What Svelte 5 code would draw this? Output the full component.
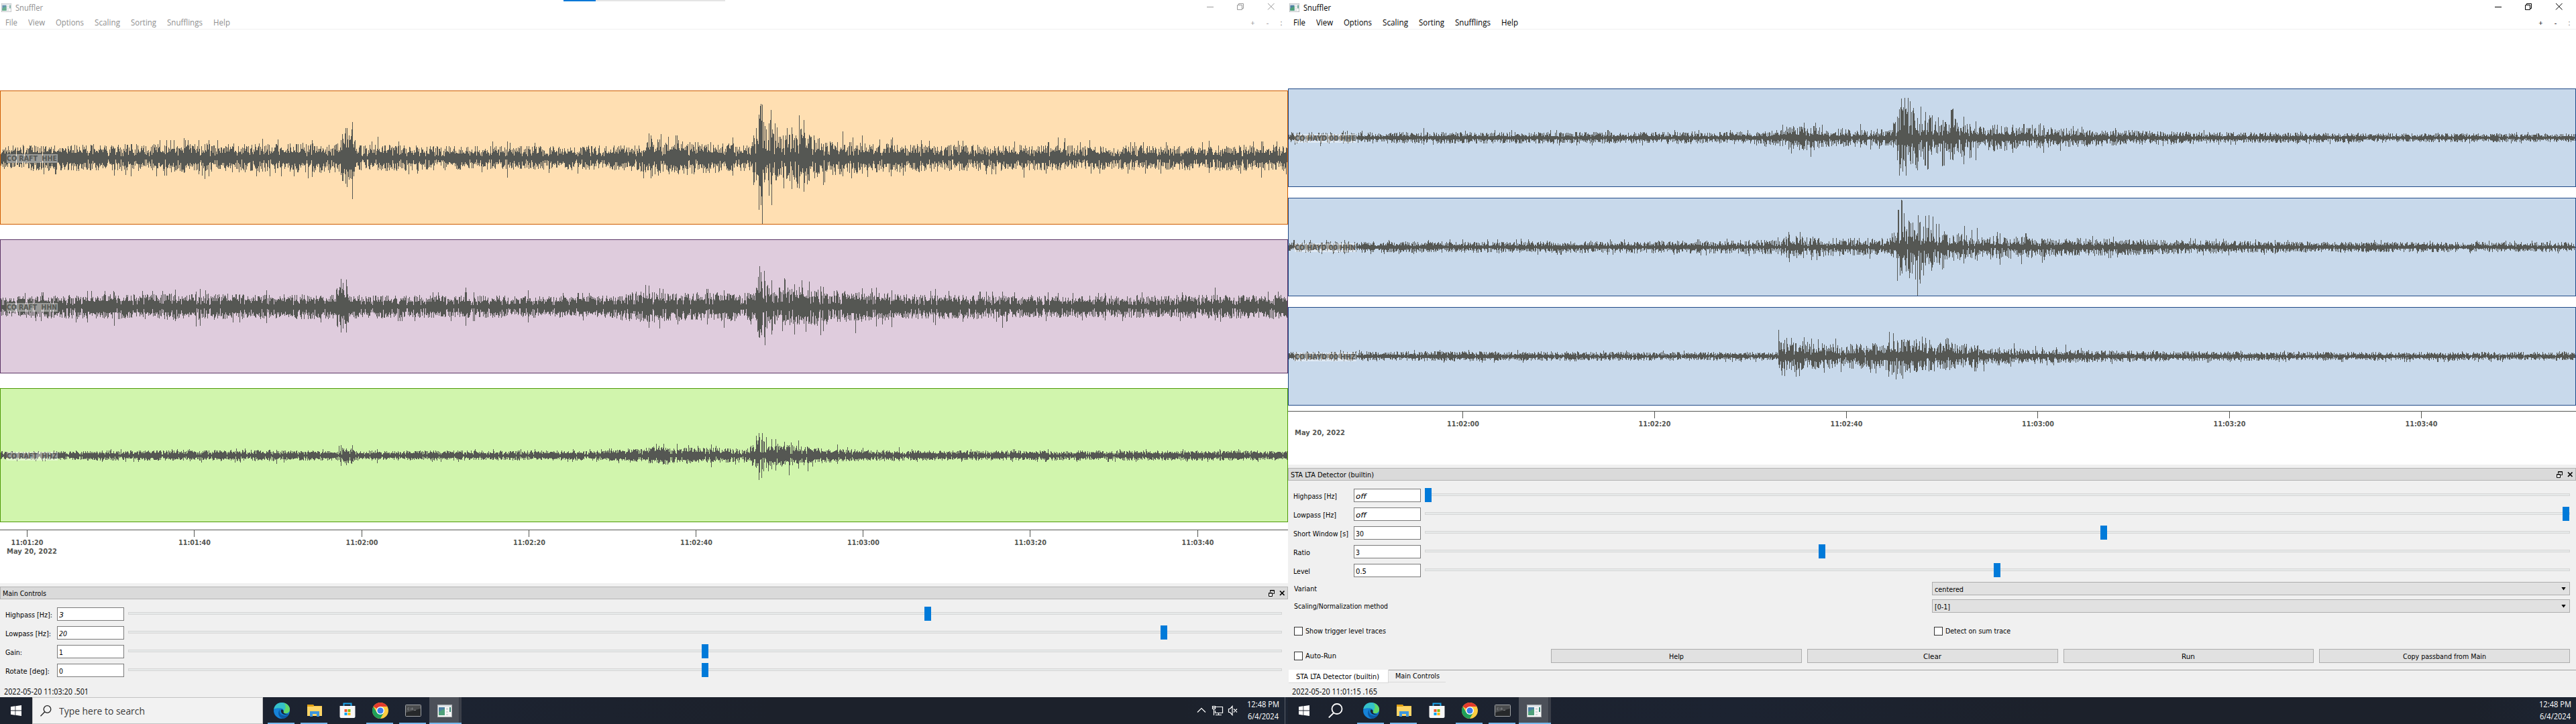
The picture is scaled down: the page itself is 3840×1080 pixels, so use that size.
<script>
  // Condenses or widens a label's glyphs so that it takes the given width in pixels.
  function fit(node, width) {
    const natural = node.getBoundingClientRect().width;
    node.style.transform = `scaleX(${width / natural})`;
    node.style.marginRight = `${width - natural}px`;
  }

  function noise(seed) {
    let s = seed;
    return () => {
      s = (s * 1664525 + 1013904223) % 4294967296;
      return s / 4294967296;
    };
  }

  function level(env, x) {
    for (let i = 1; i < env.length; i++) {
      if (x <= env[i][0]) {
        const [x0, a] = env[i - 1];
        const [x1, b] = env[i];
        return a + ((b - a) * (x - x0)) / (x1 - x0);
      }
    }
    return env[env.length - 1][1];
  }

  // One vertical stroke for each pixel column, from the envelope and the named peaks.
  function wave({ seed, mid, env, peaks, core }) {
    const rnd = noise(seed);
    const peakAt = new Map(peaks.map(([x, up, down]) => [Math.round(x), [up, down]]));
    let d = '';
    for (let x = 0; x < 1920; x++) {
      const e = level(env, x);
      const quiet = rnd() < 0.12 ? 0.3 : 1;
      let up = e * (core + (1 - core) * Math.pow(rnd(), 1.4)) * quiet;
      let down = e * (core + (1 - core) * Math.pow(rnd(), 1.4)) * quiet;
      if (rnd() < 0.02) up = e * 1.25;
      if (rnd() < 0.02) down = e * 1.25;
      if (peakAt.has(x)) {
        const [u, w] = peakAt.get(x);
        up = Math.max(up, u);
        down = Math.max(down, w);
      }
      d += `M${x}.5 ${Math.round(mid - up)}V${Math.round(mid + down) + 1}`;
    }
    return d;
  }

  const tasks = ['edge', 'folder', 'store', 'chrome', 'cmd', 'app'];
  const menus = [['File', 18], ['View', 25], ['Options', 42], ['Scaling', 38], ['Sorting', 38], ['Snufflings', 53], ['Help', 25]];

  const left = {
    side: 'left',
    clip: 84,
    ticks: [40, 289.5, 539, 788.5, 1037.5, 1286.5, 1535.5, 1785],
    times: ['11:01:20', '11:01:40', '11:02:00', '11:02:20', '11:02:40', '11:03:00', '11:03:20', '11:03:40'],
    dock: ['Main Controls', 65],
    rows: [
      ['Highpass [Hz]:', 70, '3', true, 1187, 7],
      ['Lowpass [Hz]:', 68, '20', true, 1539, 12],
      ['Gain:', 25, '1', false, 855, 6],
      ['Rotate [deg]:', 66, '0', false, 855, 6]
    ],
    stamp: ['2022-05-20 11:03:20 .501', 126],
    traces: [
      {
        name: 'CO RAFT  HHE', tone: 'orange', seed: 11, mid: 100, core: 0.33,
        env: [[0, 15], [20, 19], [300, 21], [500, 22], [507, 24], [510, 36], [527, 45], [531, 18], [560, 20], [700, 17], [950, 19], [968, 29], [1050, 24], [1120, 19], [1124, 38], [1131, 62], [1140, 62], [1148, 45], [1160, 38], [1175, 34], [1190, 46], [1205, 38], [1225, 29], [1260, 25], [1300, 22], [1400, 20], [1600, 18], [1920, 19]],
        peaks: [[274, 29, 22], [296, 26, 24], [305, 20, 31], [311, 26, 27], [391, 28, 20], [459, 18, 30], [465, 26, 28], [510, 35, 34], [515, 44, 38], [517, 44, 43], [525, 53, 61], [563, 31, 18], [734, 24, 12], [756, 24, 29], [170, 12, 26], [195, 20, 27], [233, 10, 27], [970, 33, 30], [996, 31, 20], [1092, 30, 20], [1123, 33, 40], [1131, 64, 77], [1134, 80, 70], [1136, 79, 98], [1146, 51, 56], [1149, 71, 30], [1150, 30, 70], [1158, 45, 20], [1173, 44, 30], [1180, 45, 46], [1191, 63, 45], [1198, 56, 50], [1227, 20, 40], [1256, 39, 27], [1285, 33, 23], [1330, 30, 17], [1526, 10, 29], [1577, 30, 12], [1587, 29, 16], [1624, 26, 10], [1802, 25, 22], [1880, 24, 29]]
      },
      {
        name: 'CO RAFT  HHN', tone: 'purple', seed: 29, mid: 100, core: 0.4,
        env: [[0, 14], [80, 18], [300, 19], [500, 18], [506, 30], [518, 34], [521, 17], [900, 16], [965, 26], [985, 21], [1125, 21], [1130, 48], [1140, 42], [1146, 28], [1200, 30], [1230, 27], [1260, 23], [1350, 19], [1600, 16], [1920, 18]],
        peaks: [[261, 25, 21], [298, 26, 28], [170, 21, 28], [292, 22, 29], [508, 41, 38], [511, 35, 32], [516, 40, 38], [397, 24, 24], [694, 28, 28], [787, 24, 23], [967, 31, 31], [983, 27, 32], [1079, 24, 31], [1132, 60, 46], [1134, 51, 38], [1139, 47, 45], [1140, 38, 57], [1150, 39, 41], [1169, 42, 20], [1170, 40, 20], [1184, 33, 41], [1195, 39, 20], [1223, 30, 42], [1227, 29, 36], [1275, 20, 39], [1306, 28, 29], [1329, 24, 30], [1394, 26, 27], [1494, 18, 31], [1811, 28, 20]]
      },
      {
        name: 'CO RAFT  HHZ', tone: 'green', seed: 47, mid: 100, core: 0.4,
        env: [[0, 6], [80, 6], [120, 7], [400, 8], [500, 7], [506, 12], [525, 12], [530, 7], [900, 7], [960, 12], [980, 14], [1020, 12], [1060, 11], [1115, 10], [1123, 18], [1130, 28], [1137, 26], [1145, 18], [1200, 14], [1240, 10], [1300, 8], [1400, 7], [1920, 7]],
        peaks: [[508, 15, 9], [516, 10, 14], [525, 15, 8], [412, 8, 12], [562, 9, 11], [1009, 17, 10], [1060, 16, 17], [1127, 29, 18], [1131, 33, 36], [1132, 27, 20], [1135, 23, 33], [1142, 27, 18], [1150, 24, 20], [1156, 24, 22], [1176, 15, 29], [1190, 22, 19], [1204, 11, 23], [1248, 16, 9], [1340, 12, 8]]
      }
    ]
  };

  const right = {
    side: 'right',
    clip: 100,
    ticks: [260.5, 546, 832, 1117.5, 1403, 1689],
    times: ['11:02:00', '11:02:20', '11:02:40', '11:03:00', '11:03:20', '11:03:40'],
    dock: ['STA LTA Detector (builtin)', 124],
    rows: [
      ['Highpass [Hz]', 65, 'off', true, 0, 16],
      ['Lowpass [Hz]', 64, 'off', true, 1696, 16],
      ['Short Window [s]', 82, '30', false, 1007, 12],
      ['Ratio', 25, '3', false, 587, 6],
      ['Level', 25, '0.5', false, 848, 16]
    ],
    stamp: ['2022-05-20 11:01:15 .165', 127],
    traces: [
      {
        name: 'CO HAYD 00 HHE', tone: 'blue', seed: 5, mid: 73, core: 0.2,
        env: [[0, 8], [700, 9], [733, 12], [745, 18], [785, 18], [800, 14], [900, 13], [907, 30], [912, 48], [935, 46], [960, 34], [1000, 32], [1015, 24], [1030, 18], [1060, 22], [1080, 16], [1150, 15], [1200, 12], [1300, 10], [1400, 8], [1550, 7], [1920, 6]],
        peaks: [[48, 1, 12], [202, 14, 7], [737, 19, 12], [779, 14, 28], [853, 20, 14], [908, 28, 20], [914, 58, 30], [913, 45, 20], [927, 54, 34], [921, 43, 56], [916, 40, 50], [938, 28, 48], [943, 46, 28], [949, 25, 41], [950, 37, 41], [976, 26, 41], [991, 43, 33], [990, 42, 32], [1007, 31, 39], [1025, 24, 33], [1080, 19, 22], [1121, 21, 15], [1126, 18, 22]]
      },
      {
        name: 'CO HAYD 00 HHN', tone: 'blue', seed: 83, mid: 73, core: 0.2,
        env: [[0, 8], [600, 9], [730, 11], [745, 18], [800, 14], [890, 13], [906, 18], [910, 42], [935, 38], [962, 34], [980, 23], [1010, 19], [1050, 18], [1150, 14], [1250, 12], [1350, 10], [1500, 8], [1920, 7]],
        peaks: [[347, 12, 6], [763, 22, 10], [747, 18, 22], [908, 10, 50], [909, 55, 10], [910, 55, 10], [914, 70, 35], [915, 69, 39], [918, 50, 10], [921, 20, 36], [926, 34, 46], [930, 15, 39], [938, 20, 72], [942, 37, 54], [941, 36, 48], [947, 15, 42], [950, 46, 15], [955, 47, 25], [961, 45, 26], [959, 20, 35], [966, 34, 15], [970, 34, 20], [977, 18, 31], [1008, 31, 10], [1019, 25, 16], [1027, 28, 20], [1061, 20, 26], [1093, 14, 25], [1124, 12, 23]]
      },
      {
        name: 'CO HAYD 00 HHZ', tone: 'blue', seed: 61, mid: 73, core: 0.22,
        env: [[0, 7], [300, 7], [650, 6], [729, 6], [731, 20], [742, 26], [770, 22], [820, 18], [885, 20], [900, 27], [960, 25], [990, 20], [1030, 17], [1070, 12], [1150, 10], [1250, 8], [1350, 7], [1500, 6], [1920, 6]],
        peaks: [[731, 39, 10], [732, 22, 17], [740, 24, 29], [743, 27, 10], [750, 27, 20], [762, 10, 29], [769, 28, 10], [799, 17, 24], [816, 26, 10], [896, 36, 15], [895, 20, 30], [902, 34, 20], [914, 24, 28], [945, 29, 20], [950, 27, 20], [980, 25, 20], [1037, 10, 22], [1082, 19, 8], [1114, 15, 5], [1159, 17, 8]]
      }
    ]
  };

  const buttons = [['Help', 22], ['Clear', 27], ['Run', 20], ['Copy passband from Main', 124]];
</script>

{#snippet appIcon()}
  <svg class="app-glyph" viewBox="0 0 22 19" preserveAspectRatio="none">
    <rect x="0.5" y="0.5" width="21" height="18" fill="#f6f6f6" stroke="#a9adb0" />
    <rect x="1" y="1" width="20" height="2" fill="#d8dde2" />
    <rect x="2" y="4" width="9" height="12" fill="#4d7fa3" />
    <path d="M2 16V11L11 6V16Z" fill="#4fa07a" />
    <path d="M13 5h3v3h-3zM13 10h3v2h-3zM13 14h3v2h-3z" fill="#d5d8da" />
    <rect x="18" y="4" width="2" height="7" fill="#3b8a78" />
  </svg>
{/snippet}

{#snippet taskIcon(kind)}
  {#if kind === 'edge'}
    <svg width="24" height="24" viewBox="0 0 24 24">
      <circle cx="12" cy="12" r="12" fill="#0f7bd0" />
      <path d="M0.3 10C1 4 6 0 12 0c7 0 12 4.600 12 10 0 4-3 6-6 6-3 0-4-1-3.400-2 .8-1.600 .2-5.500-4.600-5.500C5 8.500 1 9 .3 10Z" fill="#35c1c9" />
      <path d="M15 1c5 1 9 5 9 9 0 4-3 6-6 6-3 0-4-1-3.400-2C17 9 20 6 15 1Z" fill="#63d968" />
      <path d="M9 9.500C5 13 7 21 14 23.800 8 25 1.500 20 .3 13 1 9 5 7.500 9 9.500Z" fill="#1683d8" />
      <path d="M9.500 11c-2 3 0 8 6 8.500 3 .2 5-1 7-2C20 22 16 24 13 23.800 7 22 5 14 9.500 11Z" fill="#0c59a4" />
      <path d="M11.500 10.500c-1.500 2-.5 6.500 5 7.500 2 .3 4-.3 6-1.500-3 2-8 0-8-2.500.6-1.600 0-3.500-3-3.500Z" fill="#1c2430" />
    </svg>
  {:else if kind === 'folder'}
    <svg width="22" height="18" viewBox="0 0 22 18">
      <path d="M0 0h9l1 2h12v15H0Z" fill="#f6c544" />
      <path d="M0 0h9l1 2-1 1H0Z" fill="#e19f10" />
      <rect y="3" width="22" height="14" fill="#ffd667" />
      <path d="M4 18v-8h14v8h-4v-4H8v4Z" fill="#3f97dd" />
    </svg>
  {:else if kind === 'store'}
    <svg width="24" height="24" viewBox="0 0 24 24">
      <path d="M6.500 7V1.500h11V7" fill="none" stroke="#1ba4ea" stroke-width="2" />
      <path d="M.5 5h23v16q0 2-2 2h-19q-2 0-2-2Z" fill="#f7f7f7" />
      <rect x="7.500" y="10" width="4" height="4" fill="#f35325" />
      <rect x="12.500" y="10" width="4" height="4" fill="#81bc06" />
      <rect x="7.500" y="15" width="4" height="4" fill="#05a6f0" />
      <rect x="12.500" y="15" width="4" height="4" fill="#ffba08" />
    </svg>
  {:else if kind === 'chrome'}
    <svg width="24" height="24" viewBox="0 0 24 24">
      <circle cx="12" cy="12" r="12" fill="#ffcd40" />
      <path d="M12 12 1.600 6A12 12 0 0 1 22.400 6H12Z" fill="#e33b2e" />
      <path d="M1.600 6A12 12 0 0 0 12 24L17.200 15 12 12 6.800 15Z" fill="#1fa05a" />
      <circle cx="12" cy="12" r="6" fill="#fff" />
      <circle cx="12" cy="12" r="4.600" fill="#3b7ded" />
    </svg>
  {:else if kind === 'cmd'}
    <svg width="24" height="18" viewBox="0 0 24 18">
      <rect x="0.5" y="0.5" width="23" height="17" rx="1" fill="#26282a" stroke="#a2a5a8" />
      <path d="M1 1h22v5L1 12Z" fill="#4a4c4e" />
      <path d="M6 5H4v3h2M8 5v1M8 7v1M10 8V5h1v3M13 8.500h3" fill="none" stroke="#8b8d8f" stroke-width="0.8" />
    </svg>
  {:else}
    {@render appIcon()}
  {/if}
{/snippet}

{#snippet windowTop(win)}
  <header class="titlebar">
    <span class="title-icon">{@render appIcon()}</span>
    <span class="fit" use:fit={41}>Snuffler</span>
    <svg class="controls" width="101" height="10" viewBox="0 0 101 10">
      <path d="M0 5.500h10M45.500 2.500h7v7h-7zM47.500 2.500v-2h7v7h-2M91 0l9.500 9.500M91 9.500 100.500 0" />
    </svg>
  </header>
  <nav class="menubar">
    {#each menus as [label, w]}<span class="fit" use:fit={w}>{label}</span>{/each}
    <span class="corner"><i>+</i><i>-</i><i class="dots">:</i></span>
  </nav>
{/snippet}

{#snippet traces(win)}
  <section class="plot">
    {#each win.traces as t}
      <div class="trace {t.tone}">
        <svg class="wave" viewBox="0 0 1920 200" width="1920" height="200">
          <path d={wave(t)} />
        </svg>
        <div class="tag"><span class="fit" use:fit={win.clip - 9}>{t.name}</span></div>
      </div>
    {/each}
    <svg class="axis" width="1920" height="50" viewBox="0 0 1920 50">
      <path d="M0 .5H1920" />
      {#each win.ticks as x, i}
        <path d="M{Math.floor(x)}.5 1V11" />
        <text x={x - 23.5} y="23" textLength="48" lengthAdjust="spacingAndGlyphs">{win.times[i]}</text>
      {/each}
      <text x="10" y="36" textLength="75" lengthAdjust="spacingAndGlyphs">May 20, 2022</text>
    </svg>
  </section>
{/snippet}

{#snippet dockTitle(win)}
  <div class="dock-title">
    <span class="fit" use:fit={win.dock[1]}>{win.dock[0]}</span>
    <svg width="25" height="10" viewBox="0 0 25 10">
      <path d="M2.500 3.500V.5h6v5h-2M2.500 1h6" stroke="#000" fill="none" />
      <path d="M.5 4.500h5v5h-5zM.5 5h5" stroke="#000" fill="#fff" />
      <path d="M17 1.500 23.500 8M17 8 23.500 1.500" stroke="#000" stroke-width="1.700" fill="none" />
    </svg>
  </div>
{/snippet}

{#snippet sliders(win)}
  <div class="sliders">
    {#each win.rows as [label, w, value, italic, pos, vw]}
      <div class="row">
        <span class="label"><span class="fit" use:fit={w}>{label}</span></span>
        <span class="field" class:italic><span class="fit" use:fit={vw}>{value}</span></span>
        <span class="track"><b style="left: {pos}px"></b></span>
      </div>
    {/each}
  </div>
{/snippet}

{#snippet clock()}
  <div class="clock">
    <span class="fit" use:fit={48}>12:48 PM</span>
    <span class="fit" use:fit={46}>6/4/2024</span>
  </div>
{/snippet}

{#snippet startLogo()}
  <span class="start">
    <svg width="16" height="16" viewBox="0 0 16 16">
      <path d="M0 2.200 6.500 1.300V7.600H0ZM7.300 1.200 16 0V7.600H7.300ZM0 8.400H6.500V14.700L0 13.800ZM7.300 8.400H16V16L7.300 14.800Z" fill="#fff" />
    </svg>
  </span>
{/snippet}

{#snippet taskList()}
  {#each tasks as kind}
    <span class="task" class:open={kind !== 'store'} class:active={kind === 'app'}>{@render taskIcon(kind)}</span>
  {/each}
{/snippet}

<main>
  <div class="screen left">
    <div class="loading"></div>
    {@render windowTop(left)}
    {@render traces(left)}
    <section class="dock">
      {@render dockTitle(left)}
      {@render sliders(left)}
      <div class="status"><span class="fit" use:fit={left.stamp[1]}>{left.stamp[0]}</span></div>
    </section>
    <footer class="taskbar">
      {@render startLogo()}
      <div class="search">
        <svg width="17" height="17" viewBox="0 0 17 17">
          <circle cx="10.500" cy="6" r="5.300" /><path d="M6.800 9.800.5 16.300" />
        </svg>
        <span class="fit" use:fit={128}>Type here to search</span>
      </div>
      {@render taskList()}
      <svg class="tray" width="62" height="16" viewBox="0 0 62 16">
        <path d="M1 10.500 7 4.500 13 10.500" />
        <path d="M27.500 2.500H38.500V11.500H27.500V8M32.500 12v3M28 14.500H37M23.500 1.500h4v4h-4zM25.500 6v9M24 3.500h3" />
        <path d="M47.500 5.500h2l3.500-4v13L49.500 10.500h-2zM55 5.500 60 10.500M55 10.500 60 5.500" />
      </svg>
      {@render clock()}
      <span class="peek"></span>
    </footer>
  </div>

  <div class="screen right">
    {@render windowTop(right)}
    {@render traces(right)}
    <section class="dock">
      {@render dockTitle(right)}
      {@render sliders(right)}
      <div class="combo-row"><span class="fit" use:fit={34}>Variant</span><span class="combo"><span class="fit" use:fit={43}>centered</span><i></i></span></div>
      <div class="combo-row"><span class="fit" use:fit={140}>Scaling/Normalization method</span><span class="combo"><span class="fit" use:fit={23}>[0-1]</span><i></i></span></div>
      <div class="checks">
        <span class="check"><i></i><span class="fit" use:fit={120}>Show trigger level traces</span></span>
        <span class="check"><i></i><span class="fit" use:fit={97}>Detect on sum trace</span></span>
      </div>
      <div class="actions">
        <span class="check"><i></i><span class="fit" use:fit={46}>Auto-Run</span></span>
        <div class="buttons">
          {#each buttons as [label, w]}<span class="button"><span class="fit" use:fit={w}>{label}</span></span>{/each}
        </div>
      </div>
      <div class="tabs">
        <span class="tab current"><span class="fit" use:fit={124}>STA LTA Detector (builtin)</span></span>
        <span class="tabs-rest"><span class="tab"><span class="fit" use:fit={66}>Main Controls</span></span></span>
      </div>
      <div class="status"><span class="fit" use:fit={right.stamp[1]}>{right.stamp[0]}</span></div>
    </section>
    <footer class="taskbar">
      {@render startLogo()}
      <span class="find">
        <svg width="22" height="22" viewBox="0 0 22 22">
          <circle cx="13" cy="8.500" r="7.500" /><path d="M8 14.500.8 21.500" />
        </svg>
      </span>
      {@render taskList()}
      {@render clock()}
    </footer>
  </div>
</main>

<style>
  :global(body) { margin: 0; background: #fff; }
  main { display: flex; width: 3840px; height: 1080px; overflow: hidden; font-family: "Open Sans", "Noto Sans", sans-serif; font-size: 12px; color: #000; }
  .screen { position: relative; display: flex; flex-direction: column; width: 1920px; height: 1080px; overflow: hidden; background: #fff; }
  .fit { display: inline-block; flex: none; white-space: pre; transform-origin: 0 50%; }
  svg { display: block; flex: none; }

  .loading { position: absolute; left: 840px; top: 0; width: 241px; height: 2px; background: linear-gradient(90deg, #0078d7 48px, #e4e4e4 48px); }
  .titlebar { display: flex; align-items: center; flex: none; box-sizing: border-box; height: 23px; padding: 0 20px 0 2px; }
  .title-icon { width: 15px; height: 13px; margin: 0 6px 1px 0; }
  .title-icon .app-glyph { width: 15px; height: 13px; }
  .app-glyph { width: 22px; height: 19px; }
  .controls { margin: 0 0 3px auto; }
  .controls path { fill: none; stroke: #000; }
  .menubar { display: flex; align-items: center; flex: none; gap: 16px; box-sizing: border-box; height: 21px; padding: 1px 8px 0 8px; border-bottom: 1px solid #f0f0f0; }
  .corner { display: flex; gap: 15px; margin-left: auto; font-size: 11px; }
  .corner i { font-style: normal; width: 7px; text-align: center; }
  .corner .dots { width: 4px; color: #777; }
  .left .titlebar, .left .menubar { color: #8f8f8f; }
  .left .controls path { stroke: #999; }
  .left .title-icon { opacity: 0.85; }

  .plot { display: flex; flex-direction: column; flex: none; box-sizing: border-box; }
  .left .plot { height: 826px; padding-top: 91px; gap: 22px; }
  .right .plot { height: 649px; padding-top: 88px; gap: 16px; }
  .trace { position: relative; flex: none; box-sizing: border-box; border: 1px solid; overflow: hidden; }
  .left .trace { height: 200px; }
  .right .trace { height: 147px; }
  .orange { background: #ffdfb2; border-color: #ce5c00; }
  .purple { background: #dfccdd; border-color: #5c3566; }
  .green { background: #d1f5ad; border-color: #4e9a06; }
  .blue { background: #c8d9eb; border-color: #204a87; }
  .wave { margin: -1px; shape-rendering: crispEdges; }
  .wave path { fill: none; stroke: #555753; stroke-width: 1; }
  .tag { position: absolute; left: 9px; height: 13px; overflow: hidden; background: rgba(255, 255, 255, 0.4); color: #555753; font: bold 11px/14px "DejaVu Sans Condensed", "DejaVu Sans", sans-serif; }
  .left .tag { top: 94px; width: 76px; }
  .right .tag { top: 67px; width: 92px; }
  .axis path { stroke: #555753; shape-rendering: crispEdges; }
  .axis text { fill: #555753; font: bold 11px "DejaVu Sans Condensed", "DejaVu Sans", sans-serif; white-space: pre; }
  .left .axis { margin-top: -11px; }
  .right .axis { margin-top: -8px; }

  .dock { display: flex; flex-direction: column; flex: 1; box-sizing: border-box; padding-top: 5px; background: #f0f0f0; font-family: "DejaVu Sans Condensed", "DejaVu Sans", sans-serif; font-size: 11px; }
  .dock-title { display: flex; align-items: center; justify-content: space-between; flex: none; box-sizing: border-box; height: 19px; padding: 2px 3px 0 3px; background: #dadada; border: 1px solid #b4b4b4; }
  .dock-title svg { margin-bottom: 2px; }
  .sliders { display: grid; gap: 8px; flex: none; padding: 12px 9px 0 8px; }
  .row { display: flex; height: 20px; }
  .label { padding-top: 5px; line-height: 14px; }
  .left .label { width: 77px; }
  .right .label { width: 90px; }
  .field { box-sizing: border-box; width: 100px; height: 20px; margin-right: 6px; padding: 4px 0 0 2px; background: #fff; border: 1px solid #7a7a7a; line-height: 13px; }
  .italic { font-style: italic; }
  .track { position: relative; flex: 1; box-sizing: border-box; height: 4px; margin-top: 7px; background: #e7eaea; border: 1px solid #d6d6d6; }
  .track b { position: absolute; top: -9px; width: 10px; height: 21px; margin-left: -1px; background: #007ad9; }
  .status { margin-top: auto; height: 17px; padding-left: 6px; font: 12px/17px "Open Sans", "Noto Sans", sans-serif; }

  .combo-row { display: flex; align-items: center; justify-content: space-between; flex: none; height: 20px; margin: 6px 9px 0 9px; }
  .right .sliders { padding-bottom: 1px; }
  .combo { display: flex; align-items: center; justify-content: space-between; box-sizing: border-box; width: 951px; height: 20px; padding: 2px 5px 0 3px; background: #e1e1e1; border: 1px solid #adadad; }
  .combo i { width: 7px; height: 5px; margin-bottom: 2px; background: #000; clip-path: polygon(0 0, 100% 0, 50% 100%); }
  .checks { display: flex; flex: none; height: 14px; margin: 20px 0 0 9px; }
  .check { display: flex; align-items: center; gap: 4px; }
  .check i { box-sizing: border-box; width: 13px; height: 13px; background: #fff; border: 1px solid #333; }
  .checks .check:first-child { width: 954px; }
  .actions { display: flex; align-items: center; justify-content: space-between; flex: none; height: 21px; margin: 20px 9px 0 9px; }
  .buttons { display: grid; grid-template-columns: repeat(4, 1fr); gap: 8px; width: 1519px; }
  .button { display: flex; align-items: center; justify-content: center; box-sizing: border-box; height: 21px; padding-top: 1px; background: #e1e1e1; border: 1px solid #adadad; }
  .tabs { display: flex; flex: none; height: 20px; margin: 10px 0 0 1px; }
  .tab { display: flex; align-items: center; justify-content: center; box-sizing: border-box; }
  .current { width: 149px; padding: 1px 2px 0 0; background: #fff; border: solid #d9d9d9; border-width: 0 1px 1px 0; }
  .tabs-rest { flex: 1; border-top: 1px solid #a0a0a0; }
  .tabs-rest .tab { width: 85px; height: 18px; border-bottom: 1px solid #d9d9d9; }

  .taskbar { display: flex; flex: none; height: 40px; background: linear-gradient(90deg, #1c222e, #1c2331 35%, #1c212b 60%, #1c212b 92%, #1d2533); }
  .start { display: flex; align-items: center; justify-content: center; width: 48px; }
  .search { display: flex; align-items: center; gap: 11px; box-sizing: border-box; width: 344px; margin-right: 3px; padding-left: 11px; background: #f2f2f2; border: 1px solid #c3c3c3; color: #3b3b3b; font-size: 15px; }
  .search svg { fill: none; stroke: #222; stroke-width: 1.300; }
  .find { display: flex; align-items: center; justify-content: center; width: 50px; margin-right: 1px; }
  .find svg { margin-right: 4px; fill: none; stroke: #fff; stroke-width: 1.800; }
  .task { position: relative; display: flex; align-items: center; justify-content: center; width: 49px; }
  .open::after { content: ""; position: absolute; left: 4px; bottom: 0; width: 40px; height: 2px; background: #76b9ed; }
  .active { box-sizing: border-box; width: 48px; padding-right: 2px; background: linear-gradient(90deg, #4c5059 44px, #2d323c 44px, #3b3f49 45px); }
  .active::after { left: 0; width: 48px; }
  .tray { margin: 12px 0 0 auto; }
  .tray path { fill: none; stroke: #fff; stroke-width: 1.200; }
  .clock { display: flex; flex-direction: column; align-items: center; gap: 2px; padding-top: 3px; color: #fff; line-height: 16px; }
  .left .clock { width: 48px; margin-left: 13px; }
  .right .clock { width: 48px; margin: 0 7px 0 auto; }
  .peek { width: 4px; margin-left: 8px; border-left: 1px solid #5a606a; }
</style>
